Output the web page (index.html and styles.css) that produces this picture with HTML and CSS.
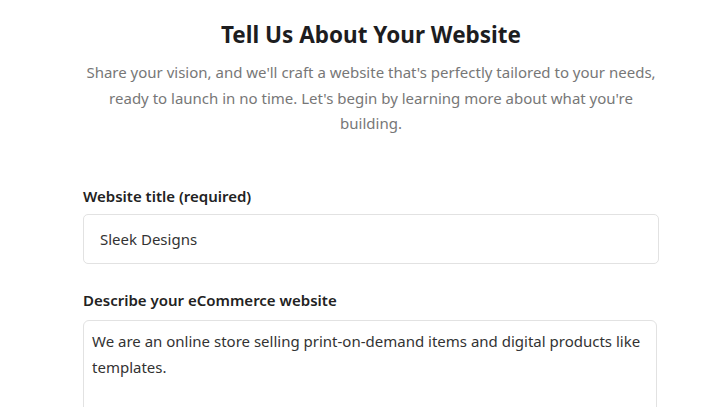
FILE: index.html
```html
<!DOCTYPE html>
<html lang="en">
<head>
<meta charset="utf-8">
<title>Tell Us About Your Website</title>
<link rel="stylesheet" href="styles.css">
</head>
<body>
<main class="page">
  <header class="intro">
    <h1 class="intro-title">Tell Us About Your Website</h1>
    <p class="intro-text">Share your vision, and we'll craft a website that's perfectly tailored to your needs, ready to launch in no time. Let's begin by learning more about what you're building.</p>
  </header>
  <form class="form">
    <div class="field">
      <label class="field-label" for="title">Website title (required)</label>
      <input class="field-input" id="title" type="text" value="Sleek Designs">
    </div>
    <div class="field">
      <label class="field-label" for="desc">Describe your eCommerce website</label>
      <textarea class="field-textarea" id="desc">We are an online store selling print-on-demand items and digital products like templates.</textarea>
    </div>
  </form>
</main>
</body>
</html>
```
FILE: styles.css
```css
html, body {
  margin: 0;
  padding: 0;
  background: #ffffff;
}
body {
  font-family: "Noto Sans", "Open Sans", sans-serif;
  color: #222;
  padding-left: 15px;
}
.page {
  width: 576px;
  margin: 0 auto;
  padding-top: 18px;
}
.intro {
  text-align: center;
}
.intro-title {
  margin: 0;
  font-size: 22.5px;
  line-height: 34px;
  font-weight: 700;
  color: #1d1d1f;
}
.intro-text {
  margin: 8px 0 0;
  font-size: 15px;
  line-height: 25.5px;
  color: #777777;
}
.form {
  margin-top: 49px;
  display: flex;
  flex-direction: column;
  gap: 26px;
}
.field {
  display: flex;
  flex-direction: column;
  gap: 8px;
}
.field-label {
  font-size: 15px;
  line-height: 20px;
  font-weight: 600;
  color: #222;
}
.field-input {
  box-sizing: border-box;
  width: 576px;
  height: 50px;
  margin: 0;
  padding: 0 16px;
  border: 1px solid #e2e2e2;
  border-radius: 5px;
  font-family: inherit;
  font-size: 15px;
  color: #333;
  background: #fff;
}
.field-textarea {
  box-sizing: border-box;
  width: 574px;
  height: 120px;
  margin: 2px 0 0;
  padding: 7px 8px;
  border: 1px solid #e2e2e2;
  border-radius: 6px;
  font-family: inherit;
  font-size: 15px;
  line-height: 26px;
  color: #333;
  background: #fff;
  resize: none;
}
```
